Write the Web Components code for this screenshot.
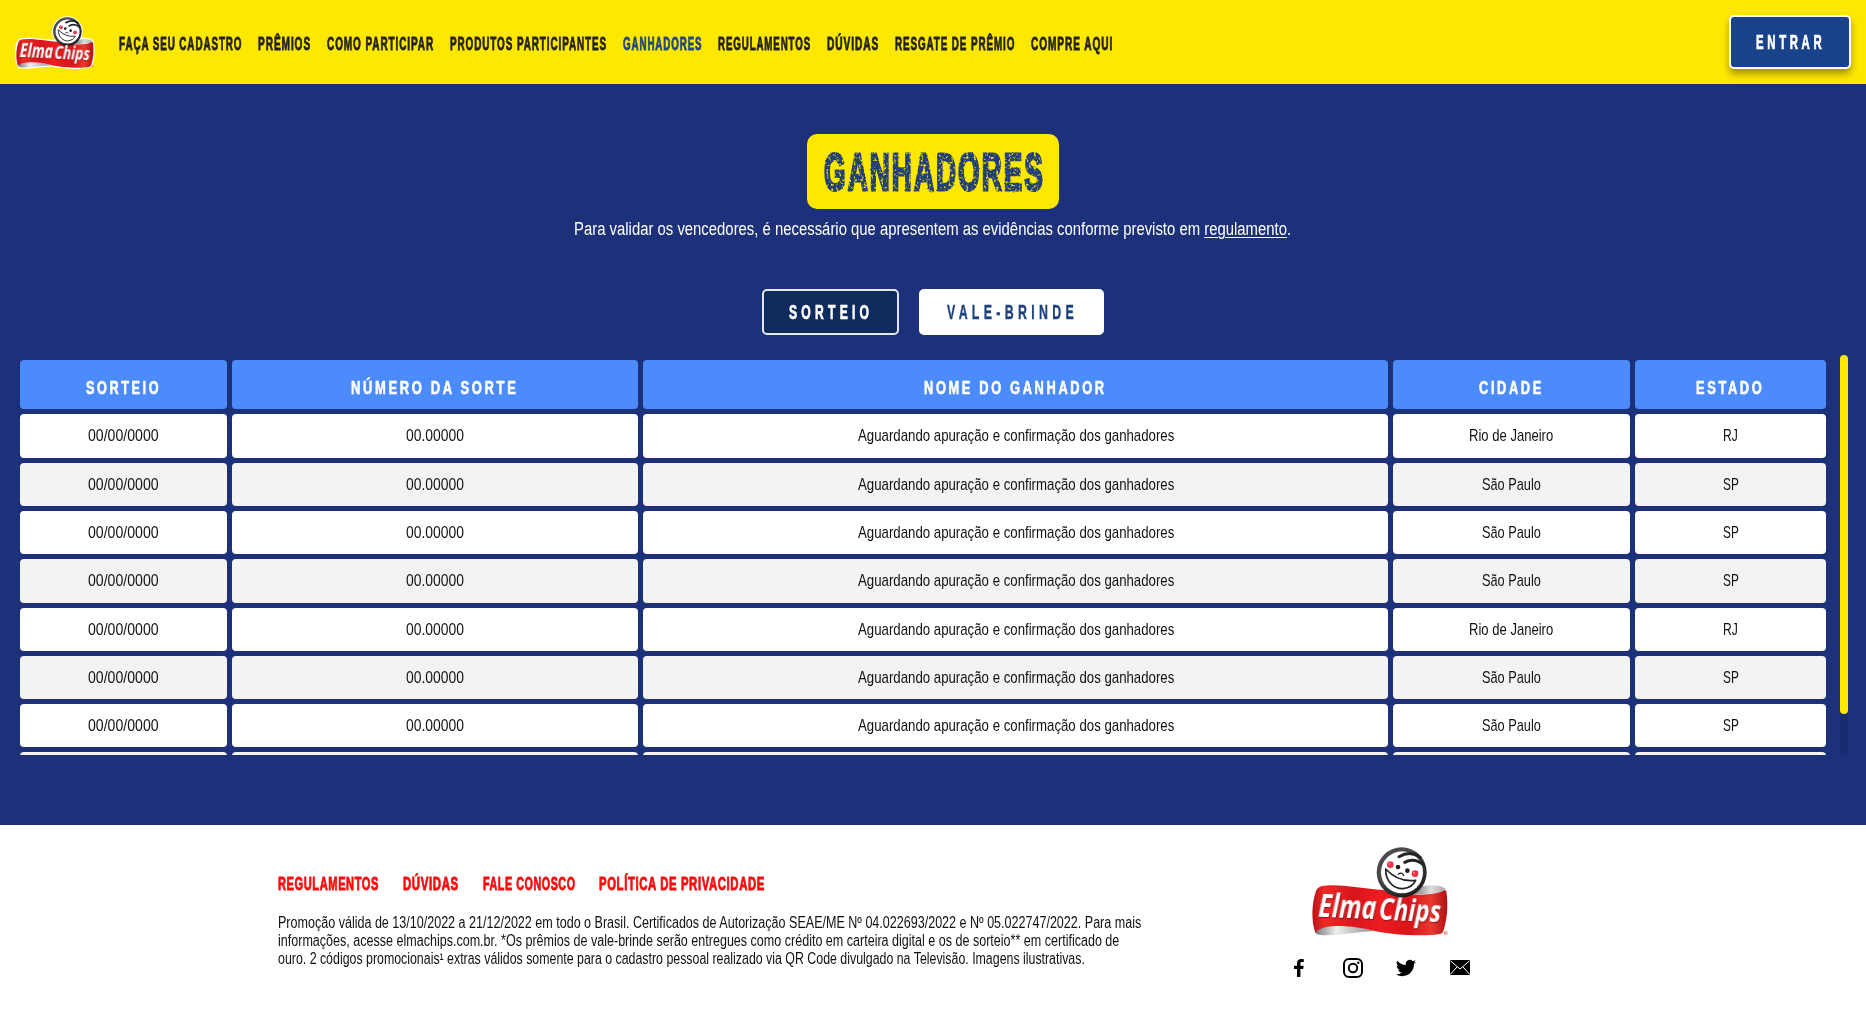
<!DOCTYPE html>
<html lang="pt-BR">
<head>
<meta charset="utf-8">
<title>Ganhadores - Elma Chips</title>
<style>
html,body{margin:0;padding:0;background:#fff}
body{font-family:"Liberation Sans Narrow","Liberation Sans",Arial,sans-serif;width:1866px;height:1017px;overflow:hidden}
</style>
</head>
<body>
<elma-page></elma-page>
<script>
// Condenses its slotted text horizontally to the width given in "w".
customElements.define('fit-text', class extends HTMLElement {
  constructor() {
    super();
    this.attachShadow({mode: 'open'}).innerHTML = `<style>
      :host{display:block;white-space:nowrap;flex:none}
      span{display:inline-block;transform-origin:0 50%;white-space:nowrap}
    </style><span><slot></slot></span>`;
  }
  connectedCallback() {
    const w = +this.getAttribute('w');
    this.style.width = w + 'px';
    const s = this.shadowRoot.querySelector('span');
    const ls = parseFloat(getComputedStyle(this).letterSpacing) || 0;
    const m = s.offsetWidth - ls;
    if (m > 0) s.style.transform = `scaleX(${w / m})`;
  }
});

customElements.define('elma-logo', class extends HTMLElement {
  constructor() {
    super();
    this.attachShadow({mode: 'open'}).innerHTML = `<style>
      :host{display:block;flex:none}
      svg{display:block;width:100%;height:100%;overflow:visible}
      .halo{display:var(--halo,none)}
      text{font-family:"Open Sans","Noto Sans",sans-serif;font-weight:700;font-style:italic;fill:#fff;filter:drop-shadow(2px 3px 1px #8a0c10)}
    </style>
    <svg viewBox="90 30 420 275">
      <defs>
        <linearGradient id="r" x1="0" x2="1"><stop offset="0" stop-color="#b81219"/><stop offset=".09" stop-color="#ee2a24"/><stop offset=".3" stop-color="#d8161c"/><stop offset=".5" stop-color="#ed1c20"/><stop offset=".72" stop-color="#d9141b"/><stop offset=".88" stop-color="#e8392f"/><stop offset="1" stop-color="#b01016"/></linearGradient>
        <linearGradient id="g" x1="0" x2="1"><stop offset="0" stop-color="#777"/><stop offset=".35" stop-color="#eee"/><stop offset="1" stop-color="#8d8d8d"/></linearGradient>
        <linearGradient id="h" x1="0" x2="1"><stop offset="0" stop-color="#777"/><stop offset=".55" stop-color="#ddd"/><stop offset="1" stop-color="#aaa"/></linearGradient>
        <radialGradient id="k" cx=".4" cy=".35" r=".7"><stop offset=".6" stop-color="#4b4b4d"/><stop offset="1" stop-color="#161616"/></radialGradient>
      </defs>
      <g class="halo" fill="#fff" stroke="#fff" stroke-width="15" stroke-linejoin="round">
        <circle cx="365" cy="112" r="73"/>
        <path d="M120 154C165 143 235 160 300 164L440 150Q486 148 497 166C505 205 502 240 490 290C450 307 340 301 280 288C210 290 160 305 112 297C94 265 94 198 108 166Q112 156 120 154Z"/>
      </g>
      <path fill="url(#h)" d="M400 160Q440 146 480 153Q494 156 497 166C480 176 440 178 400 178Z"/>
      <path fill="url(#g)" d="M106 293C105 279 125 270 165 270Q230 272 284 288C220 291 160 305 118 299Q110 299 106 293Z"/>
      <path fill="url(#r)" d="M124 154C165 144 245 160 310 165C370 181 455 186 495 166Q499 165 500 176C504 212 502 248 492 282Q489 294 482 296C440 306 340 300 284 288C225 273 130 262 106 293C93 258 95 205 108 168Q112 157 124 154Z"/>
      <circle cx="365" cy="112" r="75" fill="url(#k)"/>
      <circle cx="366" cy="112" r="63" fill="#fff"/>
      <g fill="none" stroke="#242426" stroke-linecap="round">
        <path stroke-width="9" d="M357 65Q391 45 421 67"/>
        <path stroke-width="9" d="M374 82Q402 66 430 89"/>
        <path stroke-width="4" d="M355 118Q364 109 371 121"/>
      </g>
      <ellipse cx="354" cy="96" rx="7" ry="7" fill="#222"/><ellipse cx="382" cy="107" rx="7" ry="7" fill="#222"/>
      <circle cx="331" cy="89" r="10" fill="#ee3048"/><circle cx="405" cy="116" r="10" fill="#ee3048"/>
      <circle cx="328" cy="86" r="3" fill="#ff8b98"/><circle cx="402" cy="113" r="3" fill="#ff8b98"/>
      <path d="M317 102C316 143 346 162 369 161Q397 158 407 136Q355 143 317 102Z" fill="#fff" stroke="#242426" stroke-width="5" stroke-linejoin="round"/>
      <text font-size="98" transform="translate(114 245) rotate(2.5)" textLength="174" lengthAdjust="spacingAndGlyphs">Elma</text>
      <text font-size="90" transform="translate(296 254) rotate(2.5)" textLength="186" lengthAdjust="spacingAndGlyphs">Chips</text>
      <circle cx="497" cy="294" r="5" fill="none" stroke="#d43b3b" stroke-width="1.5"/><path d="M495 297V291H498L499 293L496 294L499 297" fill="none" stroke="#d43b3b"/>
    </svg>`;
  }
});

customElements.define('nav-link', class extends HTMLElement {
  constructor() {
    super();
    this.attachShadow({mode: 'open'}).innerHTML = `<style>
      :host{display:block;font-weight:700;cursor:pointer}
    </style><fit-text w="${this.getAttribute('w')}"><slot></slot></fit-text>`;
  }
});

customElements.define('site-header', class extends HTMLElement {
  constructor() {
    super();
    this.attachShadow({mode: 'open'}).innerHTML = `<style>
      :host{display:flex;height:84px;background:#ffe800;align-items:center;box-sizing:border-box;padding:0 15px}
      elma-logo{width:80px;height:52.4px;--halo:inline}
      nav{display:flex;gap:16.7px;margin-left:24px;padding-top:3px;font-size:17.5px;line-height:20px;color:#23231c;letter-spacing:1.6px;-webkit-text-stroke:.8px currentColor}
      .on{color:#24487c}
      button{all:unset;box-sizing:border-box;margin-left:auto;width:122px;height:54px;border:2px solid #fff;border-radius:5px;background:#1a428a;color:#fff;display:flex;align-items:center;justify-content:center;font-weight:700;font-size:20px;line-height:24px;letter-spacing:6.5px;-webkit-text-stroke:.7px currentColor;padding-right:2px;box-shadow:0 5px 7px rgba(80,70,0,.5)}
    </style>
    <elma-logo></elma-logo>
    <nav>
      <nav-link w="122.5">FAÇA SEU CADASTRO</nav-link><nav-link w="52.2">PRÊMIOS</nav-link><nav-link w="106.4">COMO PARTICIPAR</nav-link><nav-link w="156">PRODUTOS PARTICIPANTES</nav-link><nav-link w="78.4" class="on">GANHADORES</nav-link><nav-link w="92.4">REGULAMENTOS</nav-link><nav-link w="51.4">DÚVIDAS</nav-link><nav-link w="119.6">RESGATE DE PRÊMIO</nav-link><nav-link w="81">COMPRE AQUI</nav-link>
    </nav>
    <button><fit-text w="65.5">ENTRAR</fit-text></button>`;
  }
});

customElements.define('tab-button', class extends HTMLElement {
  constructor() {
    super();
    this.attachShadow({mode: 'open'}).innerHTML = `<style>
      :host{display:flex;align-items:center;justify-content:center;box-sizing:border-box;height:46px;width:185px;border:2px solid #fff;border-radius:5px;background:#fff;color:#1c3f7e;font-weight:700;font-size:20px;line-height:24px;letter-spacing:7px;padding-right:3.5px;-webkit-text-stroke:.4px currentColor}
      :host([active]){background:#0f2a5c;color:#fff;width:137px;border-color:#e3e8f5;-webkit-text-stroke:.7px currentColor}
    </style><fit-text w="${this.getAttribute('w')}"><slot></slot></fit-text>`;
  }
});

customElements.define('winner-row', class extends HTMLElement {
  constructor() {
    super();
    const cells = this.getAttribute('cells').split('|');
    const widths = this.getAttribute('widths').split('|');
    this.attachShadow({mode: 'open'}).innerHTML = `<style>
      :host{display:grid;grid-template-columns:207px 406px 745px 237px 191px;column-gap:5px;height:43px;flex:none;font-size:17px;line-height:20px;color:#111}
      :host([tall]){height:44px}
      div{background:#fff;border-radius:4px;display:flex;align-items:center;justify-content:center}
      :host([alt]) div{background:#f3f3f3}
      :host([head]){height:49px;font-size:17.5px;font-weight:700;color:#fff;letter-spacing:3.6px;-webkit-text-stroke:.6px currentColor}
      :host([head]) div{background:#4b8bfb;padding-top:7px;box-sizing:border-box;padding-right:3px}
    </style>` + cells.map((c, i) => `<div>${c ? `<fit-text w="${widths[i]}">${c}</fit-text>` : ''}</div>`).join('');
  }
});

customElements.define('winner-table', class extends HTMLElement {
  constructor() {
    super();
    const rj = ['Rio de Janeiro|RJ', '84.5|15'], sp = ['São Paulo|SP', '58.5|16'];
    const rows = [rj, sp, sp, sp, rj, sp, sp].map((c, i) =>
      `<winner-row ${i % 2 ? 'alt' : ''} ${i % 3 ? '' : i < 6 ? 'tall' : ''} cells="00/00/0000|00.00000|Aguardando apuração e confirmação dos ganhadores|${c[0]}" widths="70.5|58|316|${c[1]}"></winner-row>`).join('');
    this.attachShadow({mode: 'open'}).innerHTML = `<style>
      :host{display:flex;height:400px;padding:0 18px 0 20px;justify-content:space-between}
      .list{display:flex;flex-direction:column;gap:5px;overflow:hidden;padding-top:5px;width:1806px;box-sizing:border-box}
      .track{width:8px;height:400px;background:#192c71;border-radius:4px}
      .thumb{height:359px;background:#ffe800;border-radius:4px}
    </style>
    <div class="list"><winner-row head cells="SORTEIO|NÚMERO DA SORTE|NOME DO GANHADOR|CIDADE|ESTADO" widths="72.5|164.5|180|62.5|65.5"></winner-row>${rows}<winner-row alt cells="||||" widths="||||"></winner-row></div>
    <div class="track"><div class="thumb"></div></div>`;
  }
});

customElements.define('winners-section', class extends HTMLElement {
  constructor() {
    super();
    this.attachShadow({mode: 'open'}).innerHTML = `<style>
      :host{display:block;height:741px;background:#1c317a;box-sizing:border-box;padding-top:50px}
      h1{margin:0 auto;width:252px;height:75px;border-radius:10px;background:#ffe800;color:#213f78;display:flex;align-items:center;justify-content:center;font-size:52px;line-height:60px;letter-spacing:4px;-webkit-text-stroke:3px #213f78}
      h1 fit-text{filter:url(#rough)}
      p{margin:8px 0 0;display:flex;justify-content:center;gap:5px;color:#fff;font-size:18px;line-height:24px}
      u{text-underline-offset:2px;text-decoration-thickness:1px}
      .tabs{margin:48px 0 20px;display:flex;justify-content:center;gap:20px}
      svg{display:block;width:0;height:0}
    </style>
    <svg><filter id="rough" x="-2%" y="-5%" width="104%" height="110%"><feTurbulence type="fractalNoise" baseFrequency=".4" numOctaves="2" seed="4" result="n"/><feDisplacementMap in="SourceGraphic" in2="n" scale="2" xChannelSelector="R" yChannelSelector="G" result="d"/><feColorMatrix in="n" type="matrix" values="0 0 0 0 0 0 0 0 0 0 0 0 0 0 0 0 0 0 -4 3.15" result="m"/><feComposite in="d" in2="m" operator="in"/></filter></svg>
    <h1><fit-text w="219">GANHADORES</fit-text></h1>
    <p><fit-text w="717.5">Para validar os vencedores, é necessário que apresentem as evidências conforme previsto em <u>regulamento</u>.</fit-text></p>
    <div class="tabs"><tab-button active w="80">SORTEIO</tab-button><tab-button w="126.5">VALE-BRINDE</tab-button></div>
    <winner-table></winner-table>`;
  }
});

customElements.define('social-icons', class extends HTMLElement {
  constructor() {
    super();
    this.attachShadow({mode: 'open'}).innerHTML = `<style>
      :host{display:flex;justify-content:space-between;align-items:center;height:20px}
      svg{display:block}
    </style>
    <svg width="10" height="18" viewBox="0 0 10 18"><path d="M3 18V10H0V6.8H3V4.3C3 1.5 4.7 0 7.2 0C8.4 0 9.6.1 9.8.2V3.1H8C6.7 3.1 6.4 3.8 6.4 4.7V6.8H9.7L9.2 10H6.4V18Z"/></svg>
    <svg width="20" height="20" viewBox="0 0 20 20" style="margin-left:5px"><rect x="1" y="1" width="18" height="18" rx="5" fill="none" stroke="#000" stroke-width="2"/><circle cx="10" cy="10" r="4.2" fill="none" stroke="#000" stroke-width="1.9"/><circle cx="15.3" cy="4.8" r="1.2"/></svg>
    <svg width="20" height="18" viewBox="0 1.5 24 21"><path d="M23.95 4.57a10 10 0 0 1-2.82.77 4.96 4.96 0 0 0 2.16-2.72c-.95.55-2 .95-3.13 1.18a4.92 4.92 0 0 0-8.38 4.48C7.69 8.1 4.07 6.13 1.64 3.16a4.92 4.92 0 0 0 1.52 6.57 4.9 4.9 0 0 1-2.23-.61v.06a4.92 4.92 0 0 0 3.95 4.83 5 5 0 0 1-2.21.08 4.94 4.94 0 0 0 4.6 3.42A9.87 9.87 0 0 1 0 19.54a13.99 13.99 0 0 0 7.55 2.21c9.05 0 14-7.5 14-13.98 0-.21 0-.42-.02-.63a9.94 9.94 0 0 0 2.42-2.57Z"/></svg>
    <svg width="20" height="15" viewBox="0 0 20 15"><rect width="20" height="15" rx="1"/><path d="M.5.8L10 9L19.5.8M.5 14.2L7 7M19.5 14.2L13 7" fill="none" stroke="#fff" stroke-width="1"/></svg>`;
  }
});

customElements.define('site-footer', class extends HTMLElement {
  constructor() {
    super();
    this.attachShadow({mode: 'open'}).innerHTML = `<style>
      :host{display:flex;height:192px;background:#fff;box-sizing:border-box;padding-left:278px}
      .info{width:1016px;padding-top:49px}
      nav{display:flex;gap:24.5px;color:#fb0d0d;font-size:18.5px;line-height:20px;letter-spacing:1px;-webkit-text-stroke:.9px currentColor}
      .legal{margin-top:20px;font-size:16px;line-height:18px;color:#111}
      .brand{width:176px;padding-top:20px}
      elma-logo{width:140px;height:91.7px;margin-left:16px}
      social-icons{margin-top:21.3px}
    </style>
    <div class="info">
      <nav><nav-link w="100.5">REGULAMENTOS</nav-link><nav-link w="55">DÚVIDAS</nav-link><nav-link w="92">FALE CONOSCO</nav-link><nav-link w="165.5">POLÍTICA DE PRIVACIDADE</nav-link></nav>
      <div class="legal">
        <fit-text w="863">Promoção válida de 13/10/2022 a 21/12/2022 em todo o Brasil. Certificados de Autorização SEAE/ME Nº 04.022693/2022 e Nº 05.022747/2022. Para mais</fit-text>
        <fit-text w="841">informações, acesse elmachips.com.br. *Os prêmios de vale-brinde serão entregues como crédito em carteira digital e os de sorteio** em certificado de</fit-text>
        <fit-text w="807">ouro. 2 códigos promocionais¹ extras válidos somente para o cadastro pessoal realizado via QR Code divulgado na Televisão. Imagens ilustrativas.</fit-text>
      </div>
    </div>
    <div class="brand"><elma-logo></elma-logo><social-icons></social-icons></div>`;
  }
});

customElements.define('elma-page', class extends HTMLElement {
  constructor() {
    super();
    this.attachShadow({mode: 'open'}).innerHTML = `<style>:host{display:flex;flex-direction:column}</style>
    <site-header></site-header><winners-section></winners-section><site-footer></site-footer>`;
  }
});
</script>
</body>
</html>
